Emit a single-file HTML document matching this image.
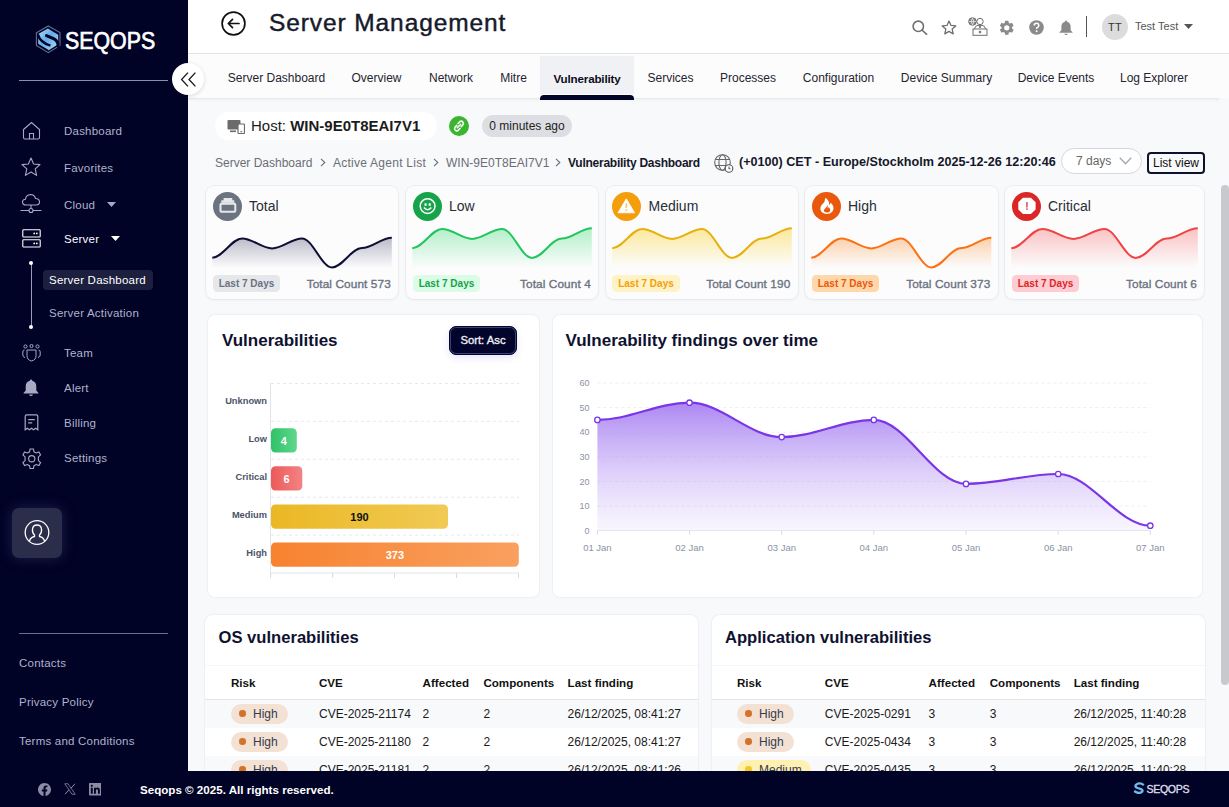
<!DOCTYPE html>
<html><head><meta charset="utf-8">
<style>
*{box-sizing:border-box;margin:0;padding:0}
html,body{width:1229px;height:807px;overflow:hidden;background:#f8f9fa;font-family:"Liberation Sans",sans-serif;color:#111}
.a{position:absolute}
.nw{white-space:nowrap}
#side{left:0;top:0;width:188px;height:807px;background:#000226}
.mi{position:absolute;left:64px;font-size:11.5px;letter-spacing:.22px;color:#b0b3cb;line-height:14.5px;white-space:nowrap}
.ic{position:absolute}
#hdr{left:188px;top:0;width:1041px;height:54px;background:#fff;border-bottom:1px solid #e3e4e8}
#tabs{left:188px;top:54px;width:1041px;height:44px;background:#fcfcfc;box-shadow:0 1px 0 #e6e8eb,0 2px 3px rgba(0,0,0,.05)}
.tab{position:absolute;top:0;height:45px;line-height:49px;font-size:12px;color:#1f2430;text-align:center;white-space:nowrap}
.card{background:#fcfcfd;border-radius:8px;box-shadow:0 0 0 1px rgba(228,230,236,.55),0 1px 3px rgba(0,0,0,.06)}
.badge{height:17px;padding:0 6px;border-radius:4.5px;font-size:10px;font-weight:700;line-height:18.5px}
.panel{background:#fff;border-radius:7px;box-shadow:0 0 3px rgba(0,0,0,.05),0 0 0 1px rgba(238,240,243,.5)}
.ttl{font-size:17px;font-weight:700;line-height:20px;color:#0e1230}
.ttl2{font-size:16.6px;font-weight:700;line-height:20px;color:#0e1230}
.th{font-size:11.6px;font-weight:700;line-height:14px;color:#111}
.td{font-size:12px;line-height:14px;color:#1a1a1a}
.pill{height:20px;border-radius:10px;font-size:12px;line-height:20px;color:#363a50;padding-left:22px}
.dot{position:absolute;left:8px;top:6.2px;width:6.5px;height:6.5px;border-radius:50%}
#foot{left:0;top:771px;width:1229px;height:36px;background:#000226}
</style></head><body>

<!-- SIDEBAR -->
<div id="side" class="a">
  <svg class="ic" style="left:35px;top:25px" width="27" height="30" viewBox="0 0 27 30">
    <defs><linearGradient id="lg1" x1="0" y1="0" x2="1" y2="1"><stop offset="0" stop-color="#b0ddf5"/><stop offset=".45" stop-color="#62ade9"/><stop offset="1" stop-color="#b3def5"/></linearGradient></defs>
    <polygon points="13.3,1 25,7.6 25,20.4 13.3,27.6 1.4,20.4 1.4,7.7" fill="none" stroke="#6a6f96" stroke-width="1.1"/>
    <polygon points="13.3,3.3 23.2,8.9 23.2,19.3 13.3,25.4 3.2,19.3 3.2,8.9" fill="url(#lg1)"/>
    <path d="M2.8,9.4 C4.4,15 8.2,18.6 15.5,20.6" fill="none" stroke="#000226" stroke-width="2.5"/>
    <path d="M11.5,10.6 L19,13.9 C22.3,15.6 23.2,18 23.2,21.5" fill="none" stroke="#000226" stroke-width="3" stroke-linecap="round"/>
    <path d="M13.5,3.3 L24,9.4" fill="none" stroke="#000226" stroke-width="1.2"/>
    <path d="M2.6,19.2 L13.3,25.6" fill="none" stroke="#000226" stroke-width="1.2"/>
  </svg>
  <div class="a nw" style="left:65px;top:25.5px;font-size:24px;color:#fff;line-height:30px;transform:scaleX(.89);transform-origin:0 0;-webkit-text-stroke:.7px #fff">SEQOPS</div>
  <div class="a" style="left:19px;top:80px;width:149px;height:1px;background:#8c8fa8"></div>

  <!-- Dashboard -->
  <svg class="ic" style="left:22px;top:121px" width="19" height="19" viewBox="0 0 19 19" fill="none" stroke="#a7aac2" stroke-width="1.1">
    <path d="M1.5,8.5 L9.5,1.5 L17.5,8.5 L17.5,16.5 Q17.5,18 16,18 L3,18 Q1.5,18 1.5,16.5 Z"/>
    <path d="M7.5,18 L7.5,12.5 L11.5,12.5 L11.5,18"/>
  </svg>
  <div class="mi" style="top:124px">Dashboard</div>
  <!-- Favorites -->
  <svg class="ic" style="left:21px;top:157px" width="20" height="20" viewBox="0 0 20 20" fill="none" stroke="#a7aac2" stroke-width="1.1" stroke-linejoin="round">
    <path d="M10,1 L12.6,7 L19,7.6 L14.2,11.9 L15.6,18.4 L10,15 L4.4,18.4 L5.8,11.9 L1,7.6 L7.4,7 Z"/>
  </svg>
  <div class="mi" style="top:161px">Favorites</div>
  <!-- Cloud -->
  <svg class="ic" style="left:20px;top:193px" width="22" height="21" viewBox="0 0 22 21" fill="none" stroke="#a7aac2" stroke-width="1.1">
    <path d="M6,12 Q2.5,12 2.5,9 Q2.5,6.3 5.5,6.2 Q6,2 10.5,1.5 Q14.5,1.5 15.5,5.5 Q19.5,5.5 19.5,9 Q19.5,12 16,12 Z"/>
    <path d="M11,12 L11,15.5"/><circle cx="11" cy="17.5" r="2"/><path d="M0.5,17.5 L9,17.5 M13,17.5 L21.5,17.5"/>
  </svg>
  <div class="mi" style="top:198px">Cloud</div>
  <svg class="ic" style="left:107px;top:202px" width="9" height="5" viewBox="0 0 9 5"><path d="M0,0 L9,0 L4.5,5 Z" fill="#a7aac2"/></svg>
  <!-- Server -->
  <svg class="ic" style="left:22px;top:229px" width="19" height="19" viewBox="0 0 19 19" fill="none" stroke="#fff" stroke-width="1.1">
    <rect x="0.8" y="0.8" width="17.4" height="7.2" rx=".8"/><rect x="0.8" y="10.8" width="17.4" height="7.2" rx=".8"/>
    <circle cx="12.2" cy="4.4" r=".9" fill="#fff" stroke="none"/><circle cx="14.8" cy="4.4" r=".9" fill="#fff" stroke="none"/>
    <circle cx="12.2" cy="14.4" r=".9" fill="#fff" stroke="none"/><circle cx="14.8" cy="14.4" r=".9" fill="#fff" stroke="none"/>
  </svg>
  <div class="mi" style="top:232px;color:#fff">Server</div>
  <svg class="ic" style="left:111px;top:236px" width="9" height="5" viewBox="0 0 9 5"><path d="M0,0 L9,0 L4.5,5 Z" fill="#fff"/></svg>
  <!-- submenu -->
  <div class="a" style="left:30.5px;top:262px;width:1px;height:65px;background:#9a9db5"></div>
  <div class="a" style="left:29px;top:260.5px;width:4px;height:4px;border-radius:50%;background:#fff"></div>
  <div class="a" style="left:29px;top:325px;width:4px;height:4px;border-radius:50%;background:#fff"></div>
  <div class="a" style="left:43px;top:270px;width:110px;height:20px;border-radius:4px;background:#1c1f3d"></div>
  <div class="mi" style="left:49px;top:273px;color:#fff">Server Dashboard</div>
  <div class="mi" style="left:49px;top:306px;color:#b0b3cb">Server Activation</div>
  <!-- Team -->
  <svg class="ic" style="left:22px;top:344px" width="19" height="18" viewBox="0 0 19 18" fill="none" stroke="#a7aac2" stroke-width="1">
    <circle cx="3.5" cy="2.5" r="1.6"/><circle cx="9.5" cy="2" r="1.6"/><circle cx="15.5" cy="2.5" r="1.6"/>
    <path d="M2.5,6 Q0.8,6 0.8,8 L0.8,11 Q0.8,13 3,13.5"/><path d="M16.5,6 Q18.2,6 18.2,8 L18.2,11 Q18.2,13 16,13.5"/>
    <path d="M5,6 L14,6 L14,11.5 Q14,16 9.5,17 Q5,16 5,11.5 Z"/>
  </svg>
  <div class="mi" style="top:346px">Team</div>
  <!-- Alert -->
  <svg class="ic" style="left:23px;top:379px" width="16" height="17" viewBox="0 0 16 17">
    <path d="M8,0.5 Q9.2,0.5 9.2,1.8 Q13.3,2.8 13.3,7.5 L13.3,11.5 L15.5,14 L15.5,14.6 L0.5,14.6 L0.5,14 L2.7,11.5 L2.7,7.5 Q2.7,2.8 6.8,1.8 Q6.8,0.5 8,0.5 Z" fill="#a7aac2"/>
    <path d="M6,15.5 Q6.5,17 8,17 Q9.5,17 10,15.5 Z" fill="#a7aac2"/>
  </svg>
  <div class="mi" style="top:381px">Alert</div>
  <!-- Billing -->
  <svg class="ic" style="left:24px;top:414px" width="15" height="17" viewBox="0 0 15 17" fill="none" stroke="#a7aac2" stroke-width="1.2">
    <path d="M1.2,15.8 L1.2,2.2 Q1.2,0.8 2.6,0.8 L12.4,0.8 Q13.8,0.8 13.8,2.2 L13.8,15.8 L11.7,14.3 L9.6,15.8 L7.5,14.3 L5.4,15.8 L3.3,14.3 Z"/>
    <path d="M4.2,5.6 L10.8,5.6 M4.2,8.8 L8.2,8.8"/>
  </svg>
  <div class="mi" style="top:416px">Billing</div>
  <!-- Settings -->
  <svg class="ic" style="left:20.3px;top:446.6px" width="23.5" height="23.5" viewBox="0 0 24 24" fill="none" stroke="#a7aac2" stroke-width="1.15">
    <path d="M10.3,2 L13.7,2 L14.3,4.9 L16.5,6.1 L19.3,5.1 L21,8.1 L18.8,10.1 L18.8,13.9 L21,15.9 L19.3,18.9 L16.5,17.9 L14.3,19.1 L13.7,22 L10.3,22 L9.7,19.1 L7.5,17.9 L4.7,18.9 L3,15.9 L5.2,13.9 L5.2,10.1 L3,8.1 L4.7,5.1 L7.5,6.1 L9.7,4.9 Z"/>
    <circle cx="12" cy="12" r="3.2"/>
  </svg>
  <div class="mi" style="top:451px">Settings</div>
  <!-- profile -->
  <div class="a" style="left:12px;top:507.5px;width:50px;height:50.5px;border-radius:7px;background:#2b2e4b;box-shadow:0 0 14px rgba(70,74,120,.45)"></div>
  <svg class="ic" style="left:24px;top:520px" width="26" height="25" viewBox="0 0 26 25" fill="none" stroke="#fff" stroke-width="1.3">
    <circle cx="13" cy="12.5" r="11.8"/>
    <path d="M5.5,21.5 Q6,17.5 10.5,16.5 L10.5,15 Q8,13 8.5,9 Q9,5 13,5 Q17,5 17.5,9 Q18,13 15.5,15 L15.5,16.5 Q20,17.5 20.5,21.5"/>
  </svg>
  <div class="a" style="left:19px;top:633px;width:149px;height:1px;background:#6b6e8a"></div>
  <div class="mi" style="left:19px;top:656px">Contacts</div>
  <div class="mi" style="left:19px;top:695px">Privacy Policy</div>
  <div class="mi" style="left:19px;top:734px">Terms and Conditions</div>
</div>

<!-- HEADER -->
<div id="hdr" class="a">
  <svg class="ic" style="left:33px;top:11px" width="25" height="25" viewBox="0 0 25 25" fill="none" stroke="#111" stroke-width="1.7">
    <circle cx="12.5" cy="12.5" r="11.4"/><path d="M18,12.5 L7.5,12.5 M11.5,8.3 L7.3,12.5 L11.5,16.7" stroke-linecap="round" stroke-linejoin="round"/>
  </svg>
  <div class="a nw" style="left:81px;top:9px;font-size:24.5px;line-height:28px;color:#161a2b;letter-spacing:.9px;-webkit-text-stroke:.45px #161a2b">Server Management</div>
  <!-- icons -->
  <svg class="ic" style="left:724px;top:20px" width="16" height="15" viewBox="0 0 16 15" fill="none" stroke="#6f6f6f" stroke-width="1.6">
    <circle cx="6.3" cy="6.3" r="5.2"/><path d="M10,10 L14.6,14.3" stroke-linecap="round"/>
  </svg>
  <svg class="ic" style="left:753px;top:20px" width="16" height="15" viewBox="0 0 16 15" fill="none" stroke="#6f6f6f" stroke-width="1.3" stroke-linejoin="round">
    <path d="M8,1 L10,5.4 L14.8,5.9 L11.2,9.1 L12.2,13.9 L8,11.4 L3.8,13.9 L4.8,9.1 L1.2,5.9 L6,5.4 Z"/>
  </svg>
  <svg class="ic" style="left:780px;top:17px" width="21" height="19" viewBox="0 0 21 19" fill="none" stroke="#6f6f6f" stroke-width="1">
    <circle cx="4.5" cy="4.5" r="3.8" fill="#8a8a8a" stroke="#6f6f6f"/>
    <path d="M1,4.5 L8,4.5 M4.5,0.8 Q2,4.5 4.5,8.2 M4.5,0.8 Q7,4.5 4.5,8.2" stroke="#fff" stroke-width=".6"/>
    <circle cx="12" cy="4.5" r="3.2"/>
    <path d="M6.5,12 Q7,8.5 10,8.3 L14,8.3 Q17,8.5 17.5,12"/>
    <rect x="5" y="12" width="14" height="6.3"/><circle cx="12" cy="15" r=".9" fill="#6f6f6f"/>
    <path d="M11,8.5 L12,11 L13,8.5"/>
  </svg>
  <svg class="ic" style="left:809.5px;top:18.5px" width="17.5" height="17.5" viewBox="0 0 24 24">
    <path fill="#8a8a8a" d="M19.14,12.94c.04-.3.06-.61.06-.94s-.02-.64-.07-.94l2.03-1.58a.49.49,0,0,0,.12-.61l-1.92-3.32a.49.49,0,0,0-.59-.22l-2.39.96a7,7,0,0,0-1.62-.94L14.4,2.81A.48.48,0,0,0,13.92,2.4H10.08a.47.47,0,0,0-.47.41L9.25,5.35a7.3,7.3,0,0,0-1.62.94L5.24,5.33a.48.48,0,0,0-.59.22L2.74,8.87a.47.47,0,0,0,.12.61L4.89,11.06A6.6,6.6,0,0,0,4.8,12a6.6,6.6,0,0,0,.07.94L2.84,14.52a.49.49,0,0,0-.12.61l1.92,3.32a.49.49,0,0,0,.59.22l2.39-.96a7,7,0,0,0,1.62.94l.36,2.54a.49.49,0,0,0,.48.41h3.84a.47.47,0,0,0,.48-.41l.36-2.54a7.3,7.3,0,0,0,1.62-.94l2.39.96a.48.48,0,0,0,.59-.22l1.92-3.32a.48.48,0,0,0-.12-.61ZM12,15.6A3.6,3.6,0,1,1,15.6,12,3.61,3.61,0,0,1,12,15.6Z"/>
  </svg>
  <svg class="ic" style="left:841px;top:20px" width="15" height="15" viewBox="0 0 15 15">
    <circle cx="7.5" cy="7.5" r="7.3" fill="#8a8a8a"/>
    <path d="M5.2,5.6 Q5.2,3.2 7.5,3.2 Q9.8,3.2 9.8,5.4 Q9.8,6.7 8.4,7.4 Q7.6,7.8 7.6,8.9" fill="none" stroke="#fff" stroke-width="1.5"/>
    <circle cx="7.6" cy="11.2" r=".95" fill="#fff"/>
  </svg>
  <svg class="ic" style="left:871px;top:20px" width="14" height="15" viewBox="0 0 16 17">
    <path d="M8,0.5 Q9.2,0.5 9.2,1.8 Q13.3,2.8 13.3,7.5 L13.3,11.5 L15.5,14 L15.5,14.6 L0.5,14.6 L0.5,14 L2.7,11.5 L2.7,7.5 Q2.7,2.8 6.8,1.8 Q6.8,0.5 8,0.5 Z" fill="#8a8a8a"/>
    <path d="M6,15.5 Q6.5,17 8,17 Q9.5,17 10,15.5 Z" fill="#8a8a8a"/>
  </svg>
  <div class="a" style="left:898px;top:16px;width:1px;height:21px;background:#555"></div>
  <div class="a" style="left:914px;top:13.5px;width:26px;height:26px;border-radius:50%;background:#dcdcdc;font-size:11px;line-height:26px;text-align:center;color:#333;letter-spacing:.3px">TT</div>
  <div class="a nw" style="left:947px;top:20px;font-size:11px;line-height:13px;color:#555">Test Test</div>
  <svg class="ic" style="left:996px;top:24px" width="9" height="5" viewBox="0 0 9 5"><path d="M0,0 L9,0 L4.5,5 Z" fill="#555"/></svg>
</div>
<div id="tabs" class="a">
  <div class="tab" style="left:27px;width:123px">Server Dashboard</div>
  <div class="tab" style="left:150px;width:77px">Overview</div>
  <div class="tab" style="left:227px;width:72px">Network</div>
  <div class="tab" style="left:299px;width:53px">Mitre</div>
  <div class="tab" style="left:352px;top:2px;height:38px;line-height:45px;width:94px;background:#f0f1f4;font-weight:700;color:#0b0d1a;font-size:11.6px;letter-spacing:-.15px">Vulnerability</div>
  <div class="a" style="left:352px;top:41px;width:94px;height:4.5px;border-radius:4px 4px 0 0;background:#02042a"></div>
  <div class="tab" style="left:446px;width:73px">Services</div>
  <div class="tab" style="left:519px;width:82px">Processes</div>
  <div class="tab" style="left:601px;width:99px">Configuration</div>
  <div class="tab" style="left:700px;width:117px">Device Summary</div>
  <div class="tab" style="left:817px;width:102px">Device Events</div>
  <div class="tab" style="left:919px;width:94px">Log Explorer</div>
</div>
<!-- collapse button -->
<div class="a" style="left:172px;top:63px;width:32px;height:32px;border-radius:50%;background:#fff;box-shadow:0 1px 4px rgba(0,0,0,.15)"></div>
<svg class="ic" style="left:180px;top:71px" width="17" height="17" viewBox="0 0 16 16" fill="none" stroke="#1a1a1a" stroke-width="1.25">
  <path d="M7.5,1.5 L1.5,8 L7.5,14.5 M14.5,1.5 L8.5,8 L14.5,14.5"/>
</svg>

<!-- HOST ROW -->
<div class="a" style="left:215px;top:112px;width:222px;height:28px;border-radius:14px;background:#fff"></div>
<svg class="ic" style="left:227px;top:119px" width="18" height="15" viewBox="0 0 18 15">
  <rect x="0.5" y="1" width="13" height="9.5" rx="1" fill="#6b6b6b"/>
  <rect x="3" y="11.5" width="6" height="1.6" fill="#6b6b6b"/>
  <rect x="11" y="5" width="6.5" height="9.5" rx="1" fill="#fff" stroke="#6b6b6b" stroke-width="1.2"/>
  <rect x="13.3" y="12.2" width="2" height="1" fill="#6b6b6b"/>
</svg>
<div class="a nw" style="left:251px;top:117px;font-size:15px;line-height:18px;color:#1b1b1b">Host: <b>WIN-9E0T8EAI7V1</b></div>
<div class="a" style="left:449px;top:116px;width:20px;height:20px;border-radius:50%;background:#3bb52f"></div>
<svg class="ic" style="left:452px;top:119px" width="14" height="14" viewBox="0 0 14 14" fill="none" stroke="#fff" stroke-width="1.5" stroke-linecap="round">
  <path d="M6,4.5 L7.8,2.7 Q9.3,1.5 10.8,2.9 Q12.1,4.4 10.9,5.9 L9.2,7.6"/>
  <path d="M8,9.5 L6.2,11.3 Q4.7,12.5 3.2,11.1 Q1.9,9.6 3.1,8.1 L4.8,6.4"/>
  <path d="M5.3,8.7 L8.7,5.3"/>
</svg>
<div class="a nw" style="left:482px;top:115px;width:90px;height:22px;border-radius:11px;background:#dcdee3;font-size:12px;line-height:22px;text-align:center;color:#222">0 minutes ago</div>

<!-- BREADCRUMB -->
<div class="a nw" style="left:215px;top:156px;font-size:12px;line-height:14px;color:#6b6e76">Server Dashboard</div>
<svg class="ic" style="left:320px;top:158px" width="6" height="9" viewBox="0 0 6 9" fill="none" stroke="#6b6e76" stroke-width="1.1"><path d="M1,0.8 L4.8,4.5 L1,8.2"/></svg>
<div class="a nw" style="left:333px;top:156px;font-size:12px;line-height:14px;color:#6b6e76;letter-spacing:.25px">Active Agent List</div>
<svg class="ic" style="left:433px;top:158px" width="6" height="9" viewBox="0 0 6 9" fill="none" stroke="#6b6e76" stroke-width="1.1"><path d="M1,0.8 L4.8,4.5 L1,8.2"/></svg>
<div class="a nw" style="left:446px;top:156px;font-size:12px;line-height:14px;color:#6b6e76">WIN-9E0T8EAI7V1</div>
<svg class="ic" style="left:555px;top:158px" width="6" height="9" viewBox="0 0 6 9" fill="none" stroke="#6b6e76" stroke-width="1.1"><path d="M1,0.8 L4.8,4.5 L1,8.2"/></svg>
<div class="a nw" style="left:568px;top:156px;font-size:12px;line-height:14px;color:#15172a;font-weight:700;letter-spacing:-.25px">Vulnerability Dashboard</div>
<svg class="ic" style="left:714px;top:154px" width="20" height="19" viewBox="0 0 20 19" fill="none" stroke="#666" stroke-width="1.1">
  <circle cx="8.5" cy="8.5" r="7.8"/><ellipse cx="8.5" cy="8.5" rx="3.6" ry="7.8"/><path d="M1.3,5.5 L15.7,5.5 M1.3,11.5 L15.7,11.5"/>
  <circle cx="15" cy="14.5" r="3.8" fill="#fff" stroke="#555"/><path d="M15,12.5 L15,14.7 L16.5,14.7"/>
</svg>
<div class="a nw" style="left:739px;top:155px;font-size:12.6px;line-height:15px;color:#15172a;font-weight:700">(+0100) CET - Europe/Stockholm 2025-12-26 12:20:46</div>
<div class="a" style="left:1061px;top:148px;width:81px;height:26px;border-radius:13px;border:1px solid #d5d8de;background:#fff"></div>
<div class="a nw" style="left:1076px;top:154px;font-size:12px;line-height:14px;color:#666">7 days</div>
<svg class="ic" style="left:1119px;top:157px" width="13" height="8" viewBox="0 0 13 8" fill="none" stroke="#a5a7ad" stroke-width="1.3"><path d="M0.8,0.8 L6.5,6.8 L12.2,0.8"/></svg>
<div class="a nw" style="left:1147px;top:152px;width:58px;height:22px;border-radius:4px;border:2px solid #0e1030;font-size:12px;line-height:18px;text-align:center;color:#111">List view</div>

<!-- CARDS -->
<div class="a card" style="left:206px;top:186px;width:192px;height:113px"></div>
<svg class="ic" style="left:212.6px;top:192px" width="29" height="29" viewBox="0 0 29 29"><circle cx="14.5" cy="14.5" r="14.5" fill="#6b7280"/><path d="M8.3,8.2 L10.6,8.2 L10.6,5.9 L19.3,5.9 L19.3,8.2 L21.3,8.2 L21.3,10.8 L8.3,10.8 Z" fill="#e5e7eb"/><rect x="7.5" y="11.6" width="14.8" height="8.2" rx="1.6" fill="none" stroke="#e5e7eb" stroke-width="2.1"/></svg>
<div class="a nw" style="left:249px;top:198px;font-size:14px;line-height:16px;color:#2a2d34">Total</div>
<svg class="ic" style="left:206px;top:220px" width="192" height="50" viewBox="0 0 192 50"><defs><linearGradient id="cg0" x1="0" y1="0" x2="0" y2="1"><stop offset="0" stop-color="#5c5f7e" stop-opacity=".42"/><stop offset="1" stop-color="#5c5f7e" stop-opacity="0"/></linearGradient></defs><path d="M6.30,37.70 C16.77,37.70 25.75,18.40 36.22,18.40 C46.69,18.40 55.66,28.40 66.13,28.40 C76.60,28.40 85.58,18.40 96.05,18.40 C106.52,18.40 115.50,47.40 125.97,47.40 C136.44,47.40 145.41,28.00 155.88,28.00 C166.35,28.00 175.33,17.70 185.80,17.70 L185.80,48 L6.30,48 Z" fill="url(#cg0)"/><path d="M6.30,37.70 C16.77,37.70 25.75,18.40 36.22,18.40 C46.69,18.40 55.66,28.40 66.13,28.40 C76.60,28.40 85.58,18.40 96.05,18.40 C106.52,18.40 115.50,47.40 125.97,47.40 C136.44,47.40 145.41,28.00 155.88,28.00 C166.35,28.00 175.33,17.70 185.80,17.70" fill="none" stroke="#0d0f33" stroke-width="2"/></svg>
<div class="a nw badge" style="left:212.7px;top:275px;background:#e5e7eb;color:#6b7280">Last 7 Days</div>
<div class="a nw" style="right:838.2px;top:276.5px;font-size:11.8px;line-height:14px;color:#6b7280;-webkit-text-stroke:.35px #6b7280;letter-spacing:.1px">Total Count 573</div>
<div class="a card" style="left:406px;top:186px;width:192px;height:113px"></div>
<svg class="ic" style="left:412.6px;top:192px" width="29" height="29" viewBox="0 0 29 29"><circle cx="14.5" cy="14.5" r="14.5" fill="#16a34a"/><circle cx="14.6" cy="14.1" r="7.4" fill="none" stroke="#fff" stroke-width="1.5"/><rect x="11.5" y="11.3" width="2.1" height="2.5" fill="#fff"/><rect x="15.6" y="11.3" width="2.1" height="2.5" fill="#fff"/><path d="M10.9,15.6 Q14.6,20 18.3,15.6" fill="none" stroke="#fff" stroke-width="1.6"/></svg>
<div class="a nw" style="left:449px;top:198px;font-size:14px;line-height:16px;color:#2a2d34">Low</div>
<svg class="ic" style="left:406px;top:220px" width="192" height="50" viewBox="0 0 192 50"><defs><linearGradient id="cg1" x1="0" y1="0" x2="0" y2="1"><stop offset="0" stop-color="#4ade80" stop-opacity=".42"/><stop offset="1" stop-color="#4ade80" stop-opacity="0"/></linearGradient></defs><path d="M6.30,28.20 C16.77,28.20 25.75,8.90 36.22,8.90 C46.69,8.90 55.66,18.90 66.13,18.90 C76.60,18.90 85.58,8.90 96.05,8.90 C106.52,8.90 115.50,37.90 125.97,37.90 C136.44,37.90 145.41,18.50 155.88,18.50 C166.35,18.50 175.33,8.20 185.80,8.20 L185.80,48 L6.30,48 Z" fill="url(#cg1)"/><path d="M6.30,28.20 C16.77,28.20 25.75,8.90 36.22,8.90 C46.69,8.90 55.66,18.90 66.13,18.90 C76.60,18.90 85.58,8.90 96.05,8.90 C106.52,8.90 115.50,37.90 125.97,37.90 C136.44,37.90 145.41,18.50 155.88,18.50 C166.35,18.50 175.33,8.20 185.80,8.20" fill="none" stroke="#22c55e" stroke-width="2"/></svg>
<div class="a nw badge" style="left:412.7px;top:275px;background:#dcfce7;color:#16a34a">Last 7 Days</div>
<div class="a nw" style="right:638.2px;top:276.5px;font-size:11.8px;line-height:14px;color:#6b7280;-webkit-text-stroke:.35px #6b7280;letter-spacing:.1px">Total Count 4</div>
<div class="a card" style="left:605.5px;top:186px;width:192px;height:113px"></div>
<svg class="ic" style="left:612.1px;top:192px" width="29" height="29" viewBox="0 0 29 29"><circle cx="14.5" cy="14.5" r="14.5" fill="#f59e0b"/><path d="M14.3,6.8 L22.6,20.8 L6,20.8 Z" fill="#fff" stroke="#fff" stroke-width=".8" stroke-linejoin="round"/><rect x="13.5" y="11.3" width="1.7" height="4.6" fill="#f8c56a"/><rect x="13.5" y="17.2" width="1.7" height="1.6" fill="#f8c56a"/></svg>
<div class="a nw" style="left:648.5px;top:198px;font-size:14px;line-height:16px;color:#2a2d34">Medium</div>
<svg class="ic" style="left:605.5px;top:220px" width="192" height="50" viewBox="0 0 192 50"><defs><linearGradient id="cg2" x1="0" y1="0" x2="0" y2="1"><stop offset="0" stop-color="#facc15" stop-opacity=".42"/><stop offset="1" stop-color="#facc15" stop-opacity="0"/></linearGradient></defs><path d="M6.30,28.20 C16.77,28.20 25.75,8.90 36.22,8.90 C46.69,8.90 55.66,18.90 66.13,18.90 C76.60,18.90 85.58,8.90 96.05,8.90 C106.52,8.90 115.50,37.90 125.97,37.90 C136.44,37.90 145.41,18.50 155.88,18.50 C166.35,18.50 175.33,8.20 185.80,8.20 L185.80,48 L6.30,48 Z" fill="url(#cg2)"/><path d="M6.30,28.20 C16.77,28.20 25.75,8.90 36.22,8.90 C46.69,8.90 55.66,18.90 66.13,18.90 C76.60,18.90 85.58,8.90 96.05,8.90 C106.52,8.90 115.50,37.90 125.97,37.90 C136.44,37.90 145.41,18.50 155.88,18.50 C166.35,18.50 175.33,8.20 185.80,8.20" fill="none" stroke="#e6b00e" stroke-width="2"/></svg>
<div class="a nw badge" style="left:612.2px;top:275px;background:#fef3c7;color:#f59e0b">Last 7 Days</div>
<div class="a nw" style="right:438.70000000000005px;top:276.5px;font-size:11.8px;line-height:14px;color:#6b7280;-webkit-text-stroke:.35px #6b7280;letter-spacing:.1px">Total Count 190</div>
<div class="a card" style="left:805px;top:186px;width:192.5px;height:113px"></div>
<svg class="ic" style="left:811.6px;top:192px" width="29" height="29" viewBox="0 0 29 29"><circle cx="14.5" cy="14.5" r="14.5" fill="#ea580c"/><path d="M13.4,5.8 C12.6,8.2 13.2,9.6 11,11.6 C9.2,13.4 8.4,15 8.4,16.7 C8.4,19.7 11.2,21.9 14.9,21.9 C18.7,21.9 21.5,19.5 21.5,16.2 C21.5,13.8 20.1,12 18.6,10.6 C18.6,11.8 18.1,12.5 17.3,12.9 C17.3,9.6 15.6,7.1 13.4,5.8 Z" fill="#fff"/><path d="M15.4,12.8 C15.2,14.4 14.5,15.1 13.1,16.4 C12.2,17.3 11.9,18 11.9,18.6 C11.9,19.8 13.2,20.6 14.96,20.6 C16.8,20.6 18.2,19.6 18.2,18 C18.2,16.6 17.2,15.7 16.5,15 C16.5,15.8 16.1,16.3 15.6,16.5 C15.9,15.3 15.9,14 15.4,12.8 Z" fill="#ea580c"/></svg>
<div class="a nw" style="left:848px;top:198px;font-size:14px;line-height:16px;color:#2a2d34">High</div>
<svg class="ic" style="left:805px;top:220px" width="192.5" height="50" viewBox="0 0 192.5 50"><defs><linearGradient id="cg3" x1="0" y1="0" x2="0" y2="1"><stop offset="0" stop-color="#fb923c" stop-opacity=".42"/><stop offset="1" stop-color="#fb923c" stop-opacity="0"/></linearGradient></defs><path d="M6.30,37.70 C16.80,37.70 25.80,18.40 36.30,18.40 C46.80,18.40 55.80,28.40 66.30,28.40 C76.80,28.40 85.80,18.40 96.30,18.40 C106.80,18.40 115.80,47.40 126.30,47.40 C136.80,47.40 145.80,28.00 156.30,28.00 C166.80,28.00 175.80,17.70 186.30,17.70 L186.30,48 L6.30,48 Z" fill="url(#cg3)"/><path d="M6.30,37.70 C16.80,37.70 25.80,18.40 36.30,18.40 C46.80,18.40 55.80,28.40 66.30,28.40 C76.80,28.40 85.80,18.40 96.30,18.40 C106.80,18.40 115.80,47.40 126.30,47.40 C136.80,47.40 145.80,28.00 156.30,28.00 C166.80,28.00 175.80,17.70 186.30,17.70" fill="none" stroke="#f97316" stroke-width="2"/></svg>
<div class="a nw badge" style="left:811.7px;top:275px;background:#fed7aa;color:#ea580c">Last 7 Days</div>
<div class="a nw" style="right:238.70000000000005px;top:276.5px;font-size:11.8px;line-height:14px;color:#6b7280;-webkit-text-stroke:.35px #6b7280;letter-spacing:.1px">Total Count 373</div>
<div class="a card" style="left:1005px;top:186px;width:199px;height:113px"></div>
<svg class="ic" style="left:1011.6px;top:192px" width="29" height="29" viewBox="0 0 29 29"><circle cx="14.5" cy="14.5" r="14.5" fill="#dc2626"/><path d="M11,5.8 L18.9,5.8 L23.6,10.3 L23.6,17.5 L18.9,22.1 L11,22.1 L6.3,17.5 L6.3,10.3 Z" fill="#fff"/><rect x="14" y="10" width="1.8" height="5.6" fill="#e46a6a"/><rect x="14" y="16.3" width="1.8" height="1.6" fill="#e46a6a"/></svg>
<div class="a nw" style="left:1048px;top:198px;font-size:14px;line-height:16px;color:#2a2d34">Critical</div>
<svg class="ic" style="left:1005px;top:220px" width="199" height="50" viewBox="0 0 199 50"><defs><linearGradient id="cg4" x1="0" y1="0" x2="0" y2="1"><stop offset="0" stop-color="#f87171" stop-opacity=".42"/><stop offset="1" stop-color="#f87171" stop-opacity="0"/></linearGradient></defs><path d="M6.30,28.20 C17.18,28.20 26.50,8.90 37.38,8.90 C48.26,8.90 57.59,18.90 68.47,18.90 C79.35,18.90 88.67,8.90 99.55,8.90 C110.43,8.90 119.75,37.90 130.63,37.90 C141.51,37.90 150.84,18.50 161.72,18.50 C172.60,18.50 181.92,8.20 192.80,8.20 L192.80,48 L6.30,48 Z" fill="url(#cg4)"/><path d="M6.30,28.20 C17.18,28.20 26.50,8.90 37.38,8.90 C48.26,8.90 57.59,18.90 68.47,18.90 C79.35,18.90 88.67,8.90 99.55,8.90 C110.43,8.90 119.75,37.90 130.63,37.90 C141.51,37.90 150.84,18.50 161.72,18.50 C172.60,18.50 181.92,8.20 192.80,8.20" fill="none" stroke="#ef4444" stroke-width="2"/></svg>
<div class="a nw badge" style="left:1011.7px;top:275px;background:#fecdd3;color:#dc2626">Last 7 Days</div>
<div class="a nw" style="right:32.200000000000045px;top:276.5px;font-size:11.8px;line-height:14px;color:#6b7280;-webkit-text-stroke:.35px #6b7280;letter-spacing:.1px">Total Count 6</div>
<!-- /CARDS -->
<!-- CHARTS -->
<div class="a panel" style="left:208px;top:315px;width:331px;height:282px"></div>
<div class="a panel" style="left:552.5px;top:315px;width:649px;height:282px"></div>
<div class="a nw ttl" style="left:222px;top:331px">Vulnerabilities</div>
<div class="a nw" style="left:449px;top:325.7px;width:68px;height:29px;border-radius:7px;background:#03042b;border:1px solid #05062e;box-shadow:inset 0 0 0 1px #3d4072,0 3px 7px rgba(120,90,230,.16);color:#ececf2;font-size:11.3px;line-height:27px;text-align:center;-webkit-text-stroke:.35px #ececf2">Sort: Asc</div>
<svg class="ic" style="left:208px;top:315px" width="331" height="282" viewBox="208 315 331 282">
<defs><linearGradient id="bg1" x1="0" x2="1"><stop offset="0" stop-color="#30c266"/><stop offset="1" stop-color="#5fd68e"/></linearGradient><linearGradient id="bg2" x1="0" x2="1"><stop offset="0" stop-color="#ec5a5a"/><stop offset="1" stop-color="#f38383"/></linearGradient><linearGradient id="bg3" x1="0" x2="1"><stop offset="0" stop-color="#ebb824"/><stop offset="1" stop-color="#f1ca55"/></linearGradient><linearGradient id="bg4" x1="0" x2="1"><stop offset="0" stop-color="#f7822f"/><stop offset="1" stop-color="#f9a060"/></linearGradient></defs>
<line x1="271" y1="383.5" x2="519" y2="383.5" stroke="#e6e8ec" stroke-width="1" stroke-dasharray="3 3"/>
<line x1="271" y1="421.4" x2="519" y2="421.4" stroke="#e6e8ec" stroke-width="1" stroke-dasharray="3 3"/>
<line x1="271" y1="459.3" x2="519" y2="459.3" stroke="#e6e8ec" stroke-width="1" stroke-dasharray="3 3"/>
<line x1="271" y1="497.2" x2="519" y2="497.2" stroke="#e6e8ec" stroke-width="1" stroke-dasharray="3 3"/>
<line x1="271" y1="535.1" x2="519" y2="535.1" stroke="#e6e8ec" stroke-width="1" stroke-dasharray="3 3"/>
<line x1="270.5" y1="383" x2="270.5" y2="573" stroke="#e3e5e9" stroke-width="1"/>
<line x1="270.5" y1="573" x2="519" y2="573" stroke="#e3e5e9" stroke-width="1"/>
<line x1="270.6" y1="573" x2="270.6" y2="578" stroke="#d8dade" stroke-width="1"/>
<line x1="332.7" y1="573" x2="332.7" y2="578" stroke="#d8dade" stroke-width="1"/>
<line x1="394.5" y1="573" x2="394.5" y2="578" stroke="#d8dade" stroke-width="1"/>
<line x1="456.5" y1="573" x2="456.5" y2="578" stroke="#d8dade" stroke-width="1"/>
<line x1="518.5" y1="573" x2="518.5" y2="578" stroke="#d8dade" stroke-width="1"/>
<text x="267" y="403.90000000000003" text-anchor="end" font-family="Liberation Sans" font-size="9.3" font-weight="700" fill="#4a5468">Unknown</text>
<text x="267" y="442.2" text-anchor="end" font-family="Liberation Sans" font-size="9.3" font-weight="700" fill="#4a5468">Low</text>
<text x="267" y="480.1" text-anchor="end" font-family="Liberation Sans" font-size="9.3" font-weight="700" fill="#4a5468">Critical</text>
<text x="267" y="518.1999999999999" text-anchor="end" font-family="Liberation Sans" font-size="9.3" font-weight="700" fill="#4a5468">Medium</text>
<text x="267" y="556.1999999999999" text-anchor="end" font-family="Liberation Sans" font-size="9.3" font-weight="700" fill="#4a5468">High</text>
<rect x="271" y="428.2" width="25.80000000000001" height="24.4" rx="4.5" fill="url(#bg1)"/>
<text x="283.9" y="444.5" text-anchor="middle" font-family="Liberation Sans" font-size="11" font-weight="700" fill="#fff">4</text>
<rect x="271" y="466.2" width="31.30000000000001" height="24.4" rx="4.5" fill="url(#bg2)"/>
<text x="286.65" y="482.5" text-anchor="middle" font-family="Liberation Sans" font-size="11" font-weight="700" fill="#fff">6</text>
<rect x="271" y="504.4" width="177" height="24.4" rx="4.5" fill="url(#bg3)"/>
<text x="359.5" y="520.6999999999999" text-anchor="middle" font-family="Liberation Sans" font-size="11" font-weight="700" fill="#111">190</text>
<rect x="271" y="542.4" width="247.79999999999995" height="24.4" rx="4.5" fill="url(#bg4)"/>
<text x="394.9" y="558.6999999999999" text-anchor="middle" font-family="Liberation Sans" font-size="11" font-weight="700" fill="#fff">373</text>
</svg>
<div class="a nw ttl" style="left:565.5px;top:331px">Vulnerability findings over time</div>
<svg class="ic" style="left:552px;top:315px" width="650" height="282" viewBox="552 315 650 282">
<defs><linearGradient id="lg2" gradientUnits="userSpaceOnUse" x1="0" y1="400" x2="0" y2="531"><stop offset="0" stop-color="#9b6ef0" stop-opacity=".85"/><stop offset="1" stop-color="#c9b2f7" stop-opacity=".12"/></linearGradient></defs>
<line x1="597.4" y1="506.0" x2="1150.3" y2="506.0" stroke="#eceef2" stroke-width="1" stroke-dasharray="3 3"/>
<line x1="597.4" y1="481.4" x2="1150.3" y2="481.4" stroke="#eceef2" stroke-width="1" stroke-dasharray="3 3"/>
<line x1="597.4" y1="456.8" x2="1150.3" y2="456.8" stroke="#eceef2" stroke-width="1" stroke-dasharray="3 3"/>
<line x1="597.4" y1="432.2" x2="1150.3" y2="432.2" stroke="#eceef2" stroke-width="1" stroke-dasharray="3 3"/>
<line x1="597.4" y1="407.6" x2="1150.3" y2="407.6" stroke="#eceef2" stroke-width="1" stroke-dasharray="3 3"/>
<line x1="597.4" y1="383.0" x2="1150.3" y2="383.0" stroke="#eceef2" stroke-width="1" stroke-dasharray="3 3"/>
<text x="589.5" y="533.8" text-anchor="end" font-family="Liberation Sans" font-size="9" fill="#8a93a6">0</text>
<text x="589.5" y="509.2" text-anchor="end" font-family="Liberation Sans" font-size="9" fill="#8a93a6">10</text>
<text x="589.5" y="484.6" text-anchor="end" font-family="Liberation Sans" font-size="9" fill="#8a93a6">20</text>
<text x="589.5" y="460.0" text-anchor="end" font-family="Liberation Sans" font-size="9" fill="#8a93a6">30</text>
<text x="589.5" y="435.4" text-anchor="end" font-family="Liberation Sans" font-size="9" fill="#8a93a6">40</text>
<text x="589.5" y="410.8" text-anchor="end" font-family="Liberation Sans" font-size="9" fill="#8a93a6">50</text>
<text x="589.5" y="386.2" text-anchor="end" font-family="Liberation Sans" font-size="9" fill="#8a93a6">60</text>
<path d="M597.40,419.90 C629.65,419.90 657.30,402.68 689.55,402.68 C721.80,402.68 749.45,437.12 781.70,437.12 C813.95,437.12 841.60,419.90 873.85,419.90 C906.10,419.90 933.75,483.86 966.00,483.86 C998.25,483.86 1025.90,474.02 1058.15,474.02 C1090.40,474.02 1118.05,525.68 1150.30,525.68 L1150.3,530.6 L597.4,530.6 Z" fill="url(#lg2)"/>
<line x1="597.4" y1="530.6" x2="1150.3" y2="530.6" stroke="#e3e5ea" stroke-width="1"/>
<line x1="597.4" y1="530.6" x2="597.4" y2="534.6" stroke="#d8dbe1" stroke-width="1"/>
<text x="597.4" y="551.0" text-anchor="middle" font-family="Liberation Sans" font-size="9.5" fill="#8a93a6">01 Jan</text>
<line x1="689.5" y1="530.6" x2="689.5" y2="534.6" stroke="#d8dbe1" stroke-width="1"/>
<text x="689.5" y="551.0" text-anchor="middle" font-family="Liberation Sans" font-size="9.5" fill="#8a93a6">02 Jan</text>
<line x1="781.7" y1="530.6" x2="781.7" y2="534.6" stroke="#d8dbe1" stroke-width="1"/>
<text x="781.7" y="551.0" text-anchor="middle" font-family="Liberation Sans" font-size="9.5" fill="#8a93a6">03 Jan</text>
<line x1="873.8" y1="530.6" x2="873.8" y2="534.6" stroke="#d8dbe1" stroke-width="1"/>
<text x="873.8" y="551.0" text-anchor="middle" font-family="Liberation Sans" font-size="9.5" fill="#8a93a6">04 Jan</text>
<line x1="966.0" y1="530.6" x2="966.0" y2="534.6" stroke="#d8dbe1" stroke-width="1"/>
<text x="966.0" y="551.0" text-anchor="middle" font-family="Liberation Sans" font-size="9.5" fill="#8a93a6">05 Jan</text>
<line x1="1058.2" y1="530.6" x2="1058.2" y2="534.6" stroke="#d8dbe1" stroke-width="1"/>
<text x="1058.2" y="551.0" text-anchor="middle" font-family="Liberation Sans" font-size="9.5" fill="#8a93a6">06 Jan</text>
<line x1="1150.3" y1="530.6" x2="1150.3" y2="534.6" stroke="#d8dbe1" stroke-width="1"/>
<text x="1150.3" y="551.0" text-anchor="middle" font-family="Liberation Sans" font-size="9.5" fill="#8a93a6">07 Jan</text>
<path d="M597.40,419.90 C629.65,419.90 657.30,402.68 689.55,402.68 C721.80,402.68 749.45,437.12 781.70,437.12 C813.95,437.12 841.60,419.90 873.85,419.90 C906.10,419.90 933.75,483.86 966.00,483.86 C998.25,483.86 1025.90,474.02 1058.15,474.02 C1090.40,474.02 1118.05,525.68 1150.30,525.68" fill="none" stroke="#7a35e6" stroke-width="2.2"/>
<circle cx="597.4" cy="419.9" r="2.7" fill="#fff" stroke="#7a35e6" stroke-width="1.3"/>
<circle cx="689.5" cy="402.7" r="2.7" fill="#fff" stroke="#7a35e6" stroke-width="1.3"/>
<circle cx="781.7" cy="437.1" r="2.7" fill="#fff" stroke="#7a35e6" stroke-width="1.3"/>
<circle cx="873.8" cy="419.9" r="2.7" fill="#fff" stroke="#7a35e6" stroke-width="1.3"/>
<circle cx="966.0" cy="483.9" r="2.7" fill="#fff" stroke="#7a35e6" stroke-width="1.3"/>
<circle cx="1058.2" cy="474.0" r="2.7" fill="#fff" stroke="#7a35e6" stroke-width="1.3"/>
<circle cx="1150.3" cy="525.7" r="2.7" fill="#fff" stroke="#7a35e6" stroke-width="1.3"/>
</svg>
<!-- /CHARTS -->
<!-- TABLES -->
<div class="a panel" style="left:205px;top:614.5px;width:493px;height:200px;border-radius:8px 8px 0 0"></div>
<div class="a nw ttl2" style="left:218.5px;top:628px">OS vulnerabilities</div>
<div class="a" style="left:205px;top:699px;width:493px;height:1px;background:#e3e5ea"></div>
<div class="a" style="left:205px;top:665px;width:493px;height:1px;background:#f5f6f8"></div>
<div class="a nw th" style="left:231px;top:676px">Risk</div>
<div class="a nw th" style="left:319px;top:676px">CVE</div>
<div class="a nw th" style="left:422.6px;top:676px">Affected</div>
<div class="a nw th" style="left:483.4px;top:676px">Components</div>
<div class="a nw th" style="left:567.6px;top:676px">Last finding</div>
<div class="a" style="left:205px;top:700px;width:493px;height:28px;background:#f8f9fb"></div>
<div class="a nw pill" style="left:231px;top:704px;width:56.5px;background:#f3e2d3"><span class="dot" style="background:#d4722a"></span>High</div>
<div class="a nw td" style="left:319px;top:707px">CVE-2025-21174</div>
<div class="a nw td" style="left:422.6px;top:707px">2</div>
<div class="a nw td" style="left:483.4px;top:707px">2</div>
<div class="a nw td" style="left:567.6px;top:707px">26/12/2025, 08:41:27</div>
<div class="a" style="left:205px;top:728px;width:493px;height:28px;background:#fff"></div>
<div class="a nw pill" style="left:231px;top:732px;width:56.5px;background:#f3e2d3"><span class="dot" style="background:#d4722a"></span>High</div>
<div class="a nw td" style="left:319px;top:735px">CVE-2025-21180</div>
<div class="a nw td" style="left:422.6px;top:735px">2</div>
<div class="a nw td" style="left:483.4px;top:735px">2</div>
<div class="a nw td" style="left:567.6px;top:735px">26/12/2025, 08:41:27</div>
<div class="a" style="left:205px;top:756px;width:493px;height:28px;background:#f8f9fb"></div>
<div class="a nw pill" style="left:231px;top:760px;width:56.5px;background:#f3e2d3"><span class="dot" style="background:#d4722a"></span>High</div>
<div class="a nw td" style="left:319px;top:763px">CVE-2025-21181</div>
<div class="a nw td" style="left:422.6px;top:763px">2</div>
<div class="a nw td" style="left:483.4px;top:763px">2</div>
<div class="a nw td" style="left:567.6px;top:763px">26/12/2025, 08:41:26</div>
<div class="a panel" style="left:711.5px;top:614.5px;width:493px;height:200px;border-radius:8px 8px 0 0"></div>
<div class="a nw ttl2" style="left:725.0px;top:628px">Application vulnerabilities</div>
<div class="a" style="left:711.5px;top:699px;width:493px;height:1px;background:#e3e5ea"></div>
<div class="a" style="left:711.5px;top:665px;width:493px;height:1px;background:#f5f6f8"></div>
<div class="a nw th" style="left:737px;top:676px">Risk</div>
<div class="a nw th" style="left:824.8px;top:676px">CVE</div>
<div class="a nw th" style="left:928.6px;top:676px">Affected</div>
<div class="a nw th" style="left:989.7px;top:676px">Components</div>
<div class="a nw th" style="left:1073.7px;top:676px">Last finding</div>
<div class="a" style="left:711.5px;top:700px;width:493px;height:28px;background:#f8f9fb"></div>
<div class="a nw pill" style="left:737px;top:704px;width:56.5px;background:#f3e2d3"><span class="dot" style="background:#d4722a"></span>High</div>
<div class="a nw td" style="left:824.8px;top:707px">CVE-2025-0291</div>
<div class="a nw td" style="left:928.6px;top:707px">3</div>
<div class="a nw td" style="left:989.7px;top:707px">3</div>
<div class="a nw td" style="left:1073.7px;top:707px">26/12/2025, 11:40:28</div>
<div class="a" style="left:711.5px;top:728px;width:493px;height:28px;background:#fff"></div>
<div class="a nw pill" style="left:737px;top:732px;width:56.5px;background:#f3e2d3"><span class="dot" style="background:#d4722a"></span>High</div>
<div class="a nw td" style="left:824.8px;top:735px">CVE-2025-0434</div>
<div class="a nw td" style="left:928.6px;top:735px">3</div>
<div class="a nw td" style="left:989.7px;top:735px">3</div>
<div class="a nw td" style="left:1073.7px;top:735px">26/12/2025, 11:40:28</div>
<div class="a" style="left:711.5px;top:756px;width:493px;height:28px;background:#f8f9fb"></div>
<div class="a nw pill" style="left:737px;top:760px;width:74px;background:#fdf0b0"><span class="dot" style="background:#f6c81e"></span>Medium</div>
<div class="a nw td" style="left:824.8px;top:763px">CVE-2025-0435</div>
<div class="a nw td" style="left:928.6px;top:763px">3</div>
<div class="a nw td" style="left:989.7px;top:763px">3</div>
<div class="a nw td" style="left:1073.7px;top:763px">26/12/2025, 11:40:28</div>
<!-- /TABLES -->
<!-- FOOTER -->
<div id="foot" class="a">
  <svg class="ic" style="left:37.5px;top:11.5px" width="13" height="13" viewBox="0 0 24 24"><path fill="#8a8ca3" d="M24,12.07C24,5.41,18.63,0,12,0S0,5.4,0,12.07C0,18.1,4.39,23.1,10.13,24V15.56H7.08V12.07h3.05V9.41c0-3.02,1.79-4.7,4.53-4.7,1.31,0,2.68.24,2.68.24v2.97H15.83c-1.49,0-1.96.93-1.96,1.89v2.26h3.33l-.53,3.49h-2.8V24C19.61,23.1,24,18.1,24,12.07Z"/></svg>
  <svg class="ic" style="left:63.5px;top:12px" width="12" height="12" viewBox="0 0 24 24"><path fill="none" stroke="#8a8ca3" stroke-width="1.6" d="M1.5,1.5 L8,1.5 L22.5,22.5 L16,22.5 Z"/><path stroke="#8a8ca3" stroke-width="2" d="M2,22.5 L10.2,13.3 M13.8,10.7 L22,1.5"/></svg>
  <svg class="ic" style="left:88.5px;top:12px" width="12.5" height="12.5" viewBox="0 0 24 24"><path fill="#8a8ca3" d="M0,1.5 Q0,0 1.5,0 L22.5,0 Q24,0 24,1.5 L24,22.5 Q24,24 22.5,24 L1.5,24 Q0,24 0,22.5 Z M3.5,9 L3.5,20.5 L7.2,20.5 L7.2,9 Z M5.35,3.3 A2.1,2.1 0 1,0 5.35,7.5 A2.1,2.1 0 1,0 5.35,3.3 Z M9.6,9 L9.6,20.5 L13.2,20.5 L13.2,14.6 Q13.2,12 15.3,12 Q17.2,12 17.2,14.6 L17.2,20.5 L20.8,20.5 L20.8,13.8 Q20.8,8.7 16.5,8.7 Q14.2,8.7 13.2,10.5 L13.2,9 Z"/></svg>
  <div class="a nw" style="left:140px;top:12px;font-size:11.6px;font-weight:700;line-height:14px;color:#fff">Seqops © 2025. All rights reserved.</div>
  <svg class="ic" style="left:1132.5px;top:11px" width="12" height="12" viewBox="0 0 12 12">
    <path d="M10.8,3.2 Q7,0 3.2,2.6 Q1.2,4.6 4.6,6 L7.4,6.9 Q10.6,8 9,9.9 Q5.6,12.4 1.2,9" fill="none" stroke="#6fbdec" stroke-width="2.3"/>
  </svg>
  <div class="a nw" style="left:1146.5px;top:12px;font-size:10.6px;line-height:13px;color:#dcdee9;letter-spacing:-.35px;-webkit-text-stroke:.35px #dcdee9">SEQOPS</div>
</div>
<!-- scrollbar -->
<div class="a" style="left:1219px;top:98px;width:10px;height:673px;background:#f8f9fa"></div>
<div class="a" style="left:1220.5px;top:185px;width:8.5px;height:500px;border-radius:4.5px;background:#c8c9ce"></div>
</body></html>
